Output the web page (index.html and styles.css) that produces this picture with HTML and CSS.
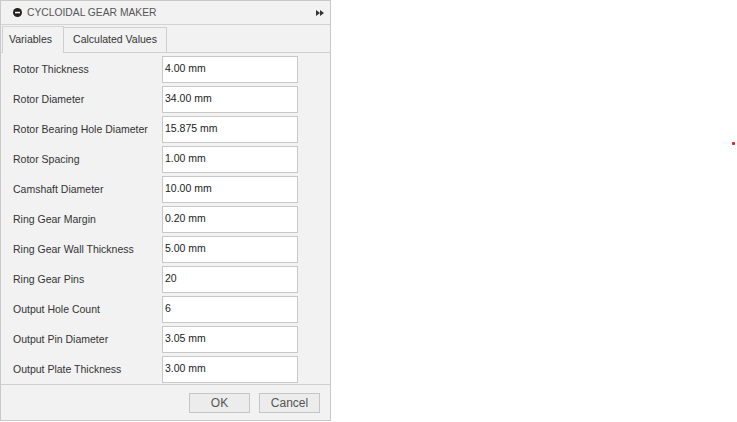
FILE: index.html
```html
<!DOCTYPE html>
<html>
<head>
<meta charset="utf-8">
<link rel="stylesheet" href="styles.css">
</head>
<body>
<div class="canvas">
  <div class="panel">
    <div class="header">
      <svg class="collapse" width="9" height="9" viewBox="0 0 9 9"><circle cx="4.5" cy="4.5" r="4.5" fill="#222"/><rect x="2" y="3.8" width="5" height="1.5" fill="#fff"/></svg>
      <span class="title">CYCLOIDAL GEAR MAKER</span>
      <svg class="expand" width="8" height="6" viewBox="0 0 8 6"><path d="M0 0L4 3L0 6Z M4 0L8 3L4 6Z" fill="#333"/></svg>
    </div>
    <div class="tabs">
      <div class="tab active">Variables</div>
      <div class="tab">Calculated Values</div>
    </div>
    <div class="rows">
      <div class="row"><span class="label">Rotor Thickness</span><div class="input">4.00 mm</div></div>
      <div class="row"><span class="label">Rotor Diameter</span><div class="input">34.00 mm</div></div>
      <div class="row"><span class="label">Rotor Bearing Hole Diameter</span><div class="input">15.875 mm</div></div>
      <div class="row"><span class="label">Rotor Spacing</span><div class="input">1.00 mm</div></div>
      <div class="row"><span class="label">Camshaft Diameter</span><div class="input">10.00 mm</div></div>
      <div class="row"><span class="label">Ring Gear Margin</span><div class="input">0.20 mm</div></div>
      <div class="row"><span class="label">Ring Gear Wall Thickness</span><div class="input">5.00 mm</div></div>
      <div class="row"><span class="label">Ring Gear Pins</span><div class="input">20</div></div>
      <div class="row"><span class="label">Output Hole Count</span><div class="input">6</div></div>
      <div class="row"><span class="label">Output Pin Diameter</span><div class="input">3.05 mm</div></div>
      <div class="row"><span class="label">Output Plate Thickness</span><div class="input">3.00 mm</div></div>
    </div>
    <div class="footer">
      <div class="btn">OK</div>
      <div class="btn">Cancel</div>
    </div>
  </div>
  <div class="dot"></div>
</div>
</body>
</html>
```
FILE: styles.css
```css
html, body {
  margin: 0;
  padding: 0;
  background: #ffffff;
}
body {
  font-family: "Liberation Sans", Arial, sans-serif;
  font-size: 10.5px;
  color: #333;
}
.canvas {
  position: relative;
  width: 737px;
  height: 422px;
}
.panel {
  width: 329px;
  height: 419px;
  border: 1px solid #c9c9c9;
  background: #f2f2f2;
  display: flex;
  flex-direction: column;
}
.header {
  border-bottom: 1px solid #d2d2d2;
  display: flex;
  align-items: center;
  padding: 0 6px 1px 12px;
  box-sizing: border-box;
  height: 24px;
  background: #f2f2f2;
}
.collapse {
  margin-right: 5px;
  margin-top: 1px;
}
.title {
  color: #555;
  font-size: 10.3px;
  flex: 1;
}
.expand {
  margin-top: 1px;
}
.tabs {
  height: 27px;
  display: flex;
  align-items: flex-end;
  padding-left: 1px;
  border-bottom: 1px solid #cfcfcf;
}
.tab {
  height: 25px;
  line-height: 22px;
  padding: 0 6px;
  border: 1px solid #cfcfcf;
  border-bottom: none;
  color: #333;
  box-sizing: border-box;
}
.tab.active {
  width: 62px;
  height: 27px;
  line-height: 24px;
  background: #f2f2f2;
  margin-bottom: -1px;
  border-top-color: #d6d6d6;
}
.tab + .tab {
  border-left: none;
  width: 103px;
  text-align: center;
  background: #f2f2f2;
}
.rows {
  padding: 3px 0 0 12px;
  display: flex;
  flex-direction: column;
  gap: 3px;
}
.row {
  display: flex;
  align-items: center;
  height: 27px;
}
.label {
  width: 149px;
  padding-bottom: 1px;
}
.input {
  width: 132px;
  height: 25px;
  background: #fff;
  border: 1px solid #c8c8c8;
  line-height: 22px;
  padding-left: 2px;
  color: #222;
  box-sizing: content-box;
}
.footer {
  margin-top: auto;
  border-top: 1px solid #d0d0d0;
  display: flex;
  justify-content: flex-end;
  align-items: flex-start;
  padding: 8px 10px 0 0;
  gap: 9px;
  box-sizing: border-box;
  height: 36px;
}
.btn {
  width: 59px;
  height: 18px;
  border: 1px solid #c5c5c5;
  background: #ececec;
  color: #555;
  text-align: center;
  line-height: 18px;
  font-size: 12px;
}
.dot {
  position: absolute;
  left: 732px;
  top: 142px;
  width: 3px;
  height: 3px;
  border-radius: 1px;
  background: #d12a2a;
}
```
